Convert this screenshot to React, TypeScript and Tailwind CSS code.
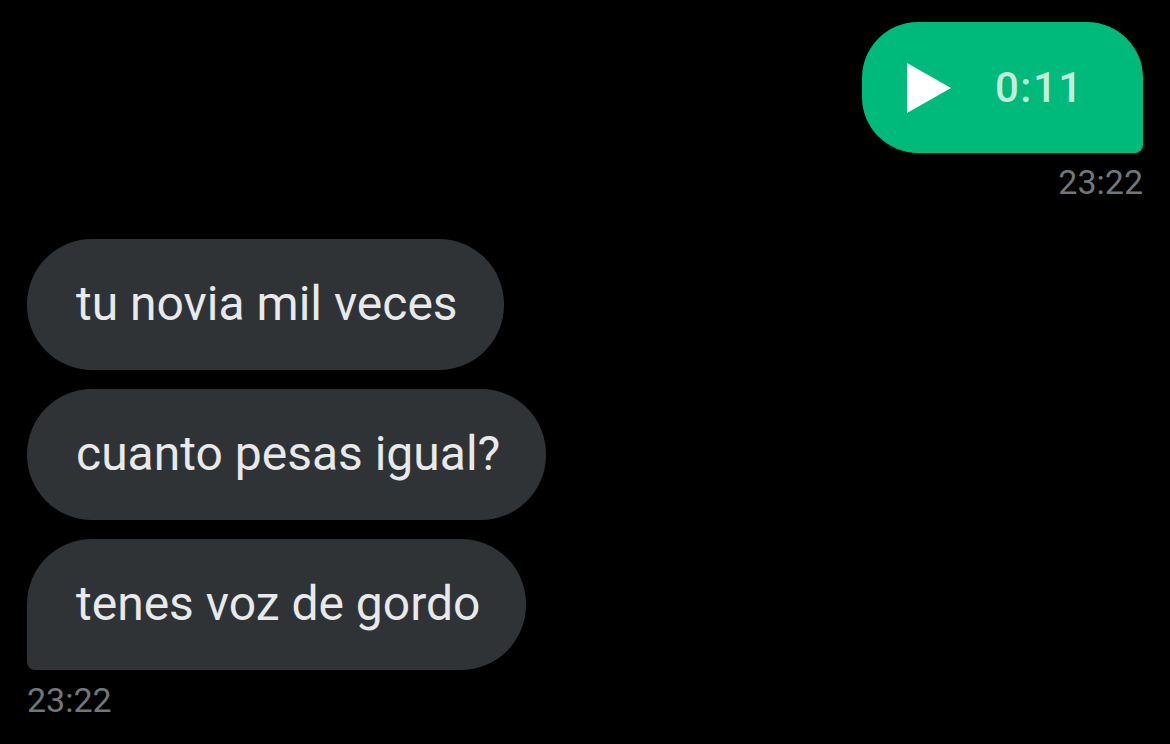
import React from 'react';

const received = ['tu novia mil veces', 'cuanto pesas igual?', 'tenes voz de gordo'];

const App: React.FC = () => {
  return (
    <div className="w-[1170px] h-[744px] bg-black overflow-hidden px-[27px] pt-[22px] flex flex-col font-['Roboto',sans-serif]">
      {/* Sent voice note */}
      <div className="flex flex-col items-end">
        <div className="w-[281px] h-[131px] bg-[#00ba7c] rounded-[56px] rounded-br-[8px] flex items-center pl-[45px]">
          <svg width="44" height="50" viewBox="0 0 44 50" className="shrink-0">
            <polygon points="0,0 44,25 0,50" fill="#ffffff" />
          </svg>
          <span className="ml-[44px] text-[42px] leading-none font-medium tracking-[1.5px] text-[#c2eedd]">0:11</span>
        </div>
        <span className="mt-[9px] text-[34px] leading-[40px] text-[#71767b]">23:22</span>
      </div>

      {/* Received messages */}
      <div className="mt-[37px] flex flex-col items-start gap-[19px]">
        {received.map((msg, i) => (
          <div
            key={i}
            className={`h-[131px] bg-[#2f3336] rounded-[65px] flex items-center pl-[49px] pr-[46px] ${
              i === received.length - 1 ? 'rounded-bl-[8px]' : ''
            }`}
          >
            <span className="text-[48px] leading-none text-[#e7e9ea] -translate-y-[1px]">{msg}</span>
          </div>
        ))}
      </div>
      <span className="mt-[10px] text-[34px] leading-[40px] text-[#71767b]">23:22</span>
    </div>
  );
};

export default App;
